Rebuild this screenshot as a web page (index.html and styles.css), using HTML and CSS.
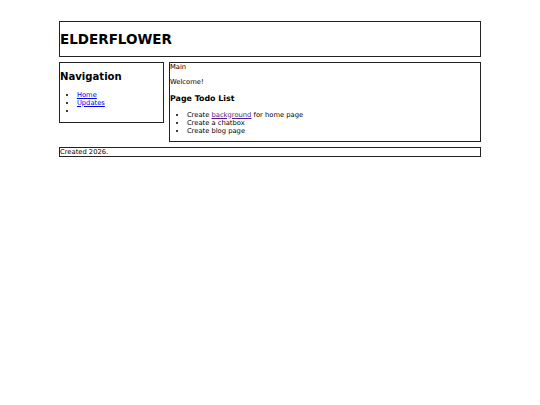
FILE: index.html
```html
<!DOCTYPE html>
<html>
<head>
<meta charset="utf-8">
<title>Elderflower</title>
<link rel="stylesheet" href="styles.css">
</head>
<body>
<div class="wrapper">
  <header class="site-header">
    <h1 class="site-title">ELDERFLOWER</h1>
  </header>
  <div class="row">
    <nav class="sidebar">
      <h2 class="sidebar-title">Navigation</h2>
      <ul class="list">
        <li><a href="#" class="link">Home</a></li>
        <li><a href="#" class="link">Updates</a></li>
        <li></li>
      </ul>
    </nav>
    <main class="content">
      <div>Main</div>
      <p class="para">Welcome!</p>
      <h3 class="content-title">Page Todo List</h3>
      <ul class="list">
        <li>Create <a href="#" class="link visited">background</a> for home page</li>
        <li>Create a chatbox</li>
        <li>Create blog page</li>
      </ul>
    </main>
  </div>
  <footer class="site-footer">Created 2026.</footer>
</div>
</body>
</html>
```
FILE: styles.css
```css
html, body {
  margin: 0;
  padding: 0;
  background: #fff;
}
body {
  font-family: "DejaVu Sans", sans-serif;
  font-size: 6.75px;
  color: #000;
}
.wrapper {
  width: 422px;
  margin: 21px auto 0;
}
.site-header {
  border: 1px solid #222;
}
.site-title {
  font-size: 13.5px;
  font-weight: bold;
  margin: 9px 0;
}
.row {
  display: flex;
  align-items: flex-start;
  gap: 5px;
  margin: 5px 0;
}
.sidebar {
  box-sizing: border-box;
  width: 105px;
  border: 1px solid #222;
}
.sidebar-title {
  font-size: 10.1px;
  font-weight: bold;
  margin: 8.4px 0;
}
.content {
  flex: 1;
  border: 1px solid #222;
}
.para {
  margin: 6.75px 0;
}
.content-title {
  font-size: 7.9px;
  font-weight: bold;
  margin: 7.9px 0;
}
.list {
  margin: 6.75px 0;
  padding-left: 16.9px;
}
.link {
  color: #0000ee;
}
.link.visited {
  color: #551a8b;
}
.site-footer {
  border: 1px solid #222;
}
```
